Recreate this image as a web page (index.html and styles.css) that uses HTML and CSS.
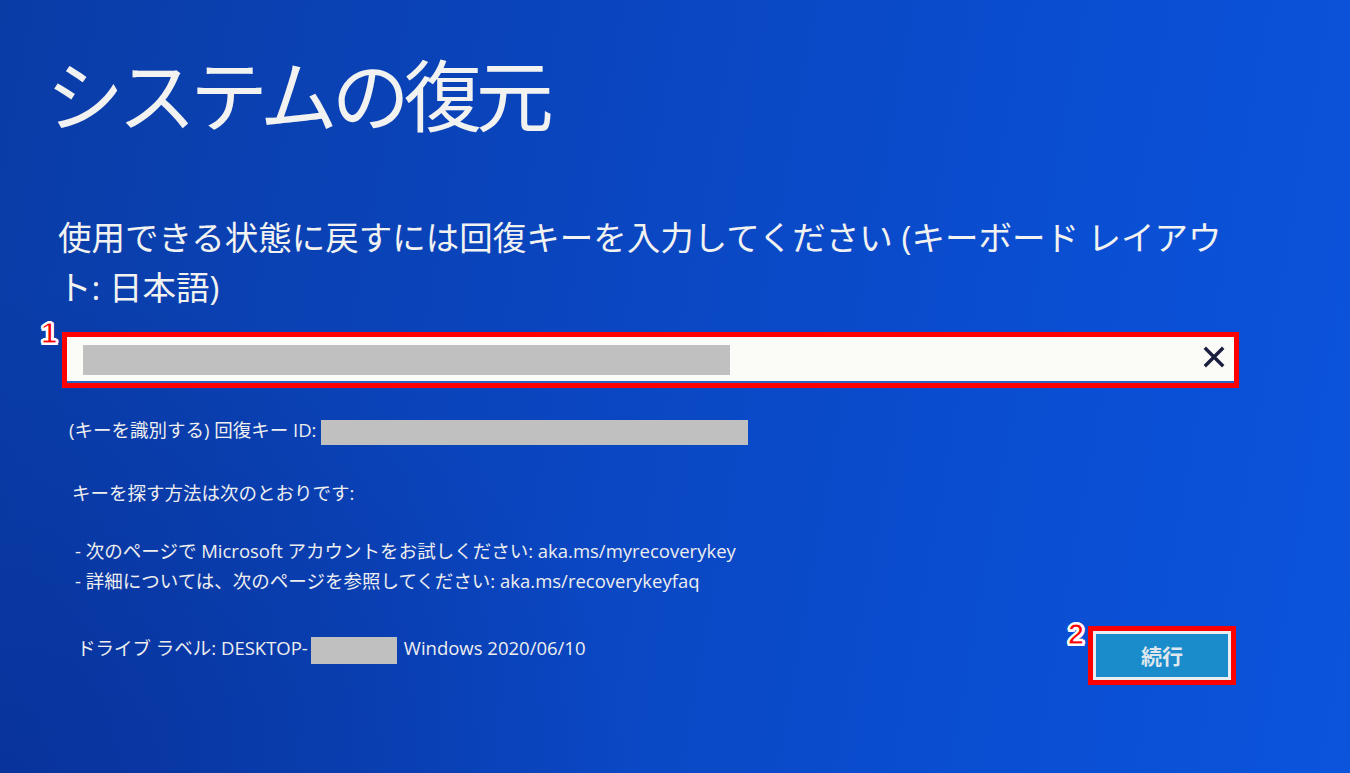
FILE: index.html
```html
<!DOCTYPE html>
<html lang="ja">
<head>
<meta charset="utf-8">
<title>システムの復元</title>
<link rel="stylesheet" href="styles.css">
</head>
<body>
<main class="screen">
  <h1 class="title">システムの復元</h1>
  <p class="prompt">使用できる状態に戻すには回復キーを入力してください (キーボード レイアウト: 日本語)</p>

  <div class="field">
    <span class="badge badge-1">1</span>
    <div class="field-inner">
      <span class="redact redact-key"></span>
      <svg class="clear" viewBox="0 0 22 22" aria-hidden="true">
        <path d="M3 3 L19 19 M19 3 L3 19" />
      </svg>
    </div>
  </div>

  <div class="info">
    <p class="line line-id">(キーを識別する) 回復キー ID:<span class="redact redact-id"></span></p>
    <p class="line line-how">キーを探す方法は次のとおりです:</p>
    <div class="tips">
      <p class="line">- 次のページで Microsoft アカウントをお試しください: aka.ms/myrecoverykey</p>
      <p class="line">- 詳細については、次のページを参照してください: aka.ms/recoverykeyfaq</p>
    </div>
  </div>

  <div class="footer">
    <p class="line drive">ドライブ ラベル: DESKTOP-<span class="redact redact-host"></span>Windows 2020/06/10</p>
    <div class="btn-wrap">
      <span class="badge badge-2">2</span>
      <button class="btn">続行</button>
    </div>
  </div>
</main>
</body>
</html>
```

FILE: styles.css
```css
html, body {
  margin: 0;
  padding: 0;
}

body {
  width: 1350px;
  height: 773px;
  overflow: hidden;
  background:
    radial-gradient(ellipse 900px 700px at 0% 100%, rgba(6, 40, 140, 0.5), rgba(6, 40, 140, 0) 70%),
    linear-gradient(100deg, #0a3ca6 0%, #0a45be 40%, #0a4ed2 75%, #0b54dc 100%);
  color: #f2f2f0;
  font-family: "Open Sans", "Noto Sans CJK JP", sans-serif;
}

.screen {
  padding-top: 46px;
}

.title {
  margin: 0 0 0 46px;
  font-family: "Noto Sans CJK JP", sans-serif;
  font-weight: 400;
  font-size: 78px;
  line-height: 92px;
  letter-spacing: -6px;
  color: #f2f2f0;
}

.prompt {
  margin: 74px 0 0 58px;
  width: 1180px;
  font-family: "Open Sans", "Noto Sans CJK JP", sans-serif;
  font-size: 33.5px;
  line-height: 50px;
  color: #f2f2f0;
}

.field {
  position: relative;
  margin: 20px 0 0 62px;
  width: 1177px;
  height: 56px;
  box-sizing: border-box;
  border: 5px solid #ff0000;
  background: #fbfbf7;
}

.field-inner {
  display: flex;
  align-items: center;
  justify-content: space-between;
  height: 100%;
  padding: 0 9px 0 16px;
  box-sizing: border-box;
  border-bottom: 2px solid #2a63c8;
}

.redact {
  display: inline-block;
  background: #c0c0c0;
}

.redact-key {
  width: 647px;
  height: 30px;
  margin-top: 2px;
}

.clear {
  width: 22px;
  height: 22px;
  margin-top: -4px;
}

.clear path {
  stroke: #1b1f3f;
  stroke-width: 3.4;
  stroke-linecap: square;
  fill: none;
}

.badge {
  position: absolute;
  font-family: "Liberation Sans", Arial, sans-serif;
  font-weight: bold;
  font-size: 29px;
  line-height: 1;
  color: #ff0000;
  -webkit-text-stroke: 1.2px #ffffff;
  text-shadow:
    -2px 0 0 #fff, 2px 0 0 #fff, 0 -2px 0 #fff, 0 2px 0 #fff,
    -1.5px -1.5px 0 #fff, 1.5px 1.5px 0 #fff, -1.5px 1.5px 0 #fff, 1.5px -1.5px 0 #fff;
}

.badge-1 {
  left: -26px;
  top: -18px;
}

.badge-2 {
  left: -25px;
  top: -11px;
}

.info {
  margin: 27px 0 0 69px;
}

.line {
  margin: 0;
  font-size: 18.5px;
  line-height: 30px;
  color: #eeeeee;
  white-space: nowrap;
}

.redact-id {
  width: 427px;
  height: 25px;
  vertical-align: middle;
  margin-left: 5px;
}

.line-how {
  margin-top: 33px;
  padding-left: 3px;
}

.tips {
  margin-top: 28px;
  padding-left: 6px;
}

.footer {
  display: flex;
  justify-content: space-between;
  align-items: flex-start;
  margin: 30px 114px 0 77px;
}

.drive {
  padding-top: 7px;
}

.redact-host {
  width: 86px;
  height: 27px;
  vertical-align: middle;
  margin: 0 7px 0 3px;
}

.btn-wrap {
  position: relative;
  width: 148px;
  height: 59px;
  box-sizing: border-box;
  border: 5px solid #ff0000;
}

.btn {
  display: block;
  width: 100%;
  height: 100%;
  margin: 0;
  box-sizing: border-box;
  border: 3px solid #e9eef2;
  background: #1a8ccc;
  color: #dfe7ee;
  font-family: "Noto Sans CJK JP", sans-serif;
  font-weight: bold;
  font-size: 21px;
  line-height: 1;
  padding: 0;
  cursor: pointer;
}
```
